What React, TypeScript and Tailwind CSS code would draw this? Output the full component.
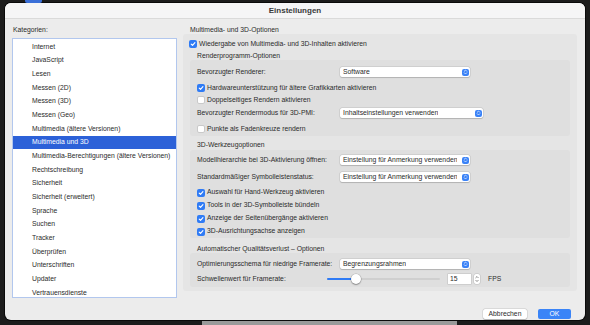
import React from 'react';

const categories = [
  'Internet',
  'JavaScript',
  'Lesen',
  'Messen (2D)',
  'Messen (3D)',
  'Messen (Geo)',
  'Multimedia (ältere Versionen)',
  'Multimedia und 3D',
  'Multimedia-Berechtigungen (ältere Versionen)',
  'Rechtschreibung',
  'Sicherheit',
  'Sicherheit (erweitert)',
  'Sprache',
  'Suchen',
  'Tracker',
  'Überprüfen',
  'Unterschriften',
  'Updater',
  'Vertrauensdienste',
];

const SELECTED = 'Multimedia und 3D';

function Checkbox({ checked }: { checked: boolean }) {
  if (!checked) {
    return <div className="w-[8px] h-[8px] shrink-0 rounded-[2px] bg-white border border-[#c9c9c9]" />;
  }
  return (
    <div className="w-[8px] h-[8px] shrink-0 rounded-[2px] bg-[#2f7bf5] flex items-center justify-center">
      <svg width="6" height="6" viewBox="0 0 10 10">
        <path d="M2 5.2 L4.2 7.4 L8.2 2.6" fill="none" stroke="white" strokeWidth="1.8" strokeLinecap="round" strokeLinejoin="round" />
      </svg>
    </div>
  );
}

function CheckRow({ checked, label, h = 'h-[12px]', extra = '' }: { checked: boolean; label: string; h?: string; extra?: string }) {
  return (
    <div className={`flex items-center gap-[2px] ${h} ${extra}`}>
      <Checkbox checked={checked} />
      <span>{label}</span>
    </div>
  );
}

function Stepper() {
  return (
    <div className="w-[7px] h-[7px] rounded-[2px] bg-[#3a82f7] flex items-center justify-center">
      <svg width="5" height="6" viewBox="0 0 10 12">
        <path d="M2.5 4.5 L5 2 L7.5 4.5 M2.5 7.5 L5 10 L7.5 7.5" fill="none" stroke="white" strokeWidth="1.4" strokeLinecap="round" strokeLinejoin="round" />
      </svg>
    </div>
  );
}

function Select({ value, w = 'w-[130px]' }: { value: string; w?: string }) {
  return (
    <div className={`${w} h-[10px] bg-white rounded-[2px] shadow-[0_0_0_0.5px_rgba(0,0,0,0.12),0_0.5px_1px_rgba(0,0,0,0.15)] flex items-center justify-between pl-[3px] pr-[1px]`}>
      <span className="truncate">{value}</span>
      <Stepper />
    </div>
  );
}

function SelectRow({ label, value, w, extra = '' }: { label: string; value: string; w?: string; extra?: string }) {
  return (
    <div className={`flex items-center h-[14px] ${extra}`}>
      <span className="w-[143px] shrink-0">{label}</span>
      <Select value={value} w={w} />
    </div>
  );
}

export default function App() {
  return (
    <div
      className="w-[590px] h-[325px] bg-[#1c1c1c] relative overflow-hidden pt-[3px] px-[5px] text-[6.8px] text-[#2b2b2b]"
      style={{ fontFamily: '"Liberation Sans", Arial, sans-serif' }}
    >
      <div className="absolute left-[25px] top-0 w-[17px] h-[3px] bg-[#3a6fd8] rounded-b-[2px]" />

      <div className="h-[317px] rounded-[6px] bg-[#ececec] flex flex-col overflow-hidden shadow-[0_0_0_1px_#0a0a0a]">
        <div className="h-[16px] shrink-0 bg-[#f5f5f6] border-b border-[#dadada] flex items-center justify-center text-[8px] font-bold text-[#3a3a3a]">
          Einstellungen
        </div>

        <div className="flex pl-[7px] pr-[8px] pt-[6px] gap-[6px]">
          <div className="w-[165px] shrink-0 flex flex-col">
            <div className="h-[10px] leading-[10px] mb-[3px] pl-[1px]">Kategorien:</div>
            <div className="h-[260px] bg-white border border-[#b2c7ee] pt-[1px] flex flex-col">
              {categories.map((c) => (
                <div
                  key={c}
                  className={`h-[13.67px] shrink-0 flex items-center pl-[19px] ${c === SELECTED ? 'bg-[#2c61d8] text-white' : ''}`}
                >
                  {c}
                </div>
              ))}
            </div>
          </div>

          <div className="flex-1 flex flex-col">
            <div className="h-[9px] leading-[9px] pl-[7px]">Multimedia- und 3D-Optionen</div>
            <div className="bg-[#e5e5e5] rounded-[3px] pt-[4px] pb-[4px] flex flex-col">
              <CheckRow checked label="Wiedergabe von Multimedia- und 3D-Inhalten aktivieren" extra="pl-[6px]" />
              <div className="h-[10px] leading-[10px] pl-[14px] mt-[1px] -mb-[1px]">Renderprogramm-Optionen</div>

              <div className="mx-[7px] bg-[#dfdfdf] rounded-[3px] pl-[7px] pt-[5px] pb-[1px] flex flex-col">
                <SelectRow label="Bevorzugter Renderer:" value="Software" />
                <CheckRow checked label="Hardwareunterstützung für ältere Grafikkarten aktivieren" extra="mt-[3px]" />
                <CheckRow checked={false} label="Doppelseitiges Rendern aktivieren" />
                <SelectRow label="Bevorzugter Rendermodus für 3D-PMI:" value="Inhaltseinstellungen verwenden" w="w-[143px]" />
                <CheckRow checked={false} label="Punkte als Fadenkreuze rendern" extra="mt-[3px]" />
              </div>

              <div className="h-[14px] pt-[4px] leading-[10px] pl-[14px]">3D-Werkzeugoptionen</div>

              <div className="mx-[7px] bg-[#dfdfdf] rounded-[3px] pl-[7px] pt-[3px] pb-[0px] flex flex-col">
                <SelectRow label="Modellhierarchie bei 3D-Aktivierung öffnen:" value="Einstellung für Anmerkung verwenden" />
                <SelectRow label="Standardmäßiger Symbolleistenstatus:" value="Einstellung für Anmerkung verwenden" extra="mt-[3px]" />
                <CheckRow checked label="Auswahl für Hand-Werkzeug aktivieren" h="h-[13px]" extra="mt-[2px]" />
                <CheckRow checked label="Tools in der 3D-Symbolleiste bündeln" h="h-[13px]" />
                <CheckRow checked label="Anzeige der Seitenübergänge aktivieren" h="h-[13px]" />
                <CheckRow checked label="3D-Ausrichtungsachse anzeigen" h="h-[13px]" />
              </div>

              <div className="h-[15px] pt-[6px] leading-[9px] pl-[14px]">Automatischer Qualitätsverlust – Optionen</div>

              <div className="mx-[7px] bg-[#dfdfdf] rounded-[3px] pl-[7px] pt-[4px] pb-[1px] flex flex-col">
                <SelectRow label="Optimierungsschema für niedrige Framerate:" value="Begrenzungsrahmen" />
                <div className="flex items-center h-[14px] mt-[1px]">
                  <span className="w-[130px] shrink-0">Schwellenwert für Framerate:</span>
                  <div className="relative w-[113px] h-[2px] bg-[#cfcfcf] rounded-full">
                    <div className="absolute left-0 top-0 h-[2px] w-[29px] bg-[#2f7bf5] rounded-full" />
                    <div className="absolute left-[24px] top-[-4px] w-[10px] h-[10px] rounded-full bg-white shadow-[0_0_0_0.5px_rgba(0,0,0,0.2),0_1px_1.5px_rgba(0,0,0,0.3)]" />
                  </div>
                  <div className="ml-[8px] w-[23px] h-[10px] bg-white shadow-[0_0_0_0.5px_rgba(0,0,0,0.15)] flex items-center pl-[2px]">15</div>
                  <div className="ml-[3px] w-[6px] h-[10px] rounded-[2px] bg-white shadow-[0_0_0_0.5px_rgba(0,0,0,0.15)] flex items-center justify-center">
                    <svg width="4" height="8" viewBox="0 0 8 16">
                      <path d="M1.5 5.5 L4 3 L6.5 5.5 M1.5 10.5 L4 13 L6.5 10.5" fill="none" stroke="#555" strokeWidth="1.3" strokeLinecap="round" strokeLinejoin="round" />
                    </svg>
                  </div>
                  <span className="ml-[8px]">FPS</span>
                </div>
              </div>
            </div>
          </div>
        </div>

        <div className="flex justify-end gap-[11px] pr-[14px] mt-[11px]">
          <div className="w-[44px] h-[10px] bg-white rounded-[2px] shadow-[0_0_0_0.5px_rgba(0,0,0,0.12),0_0.5px_1px_rgba(0,0,0,0.2)] flex items-center justify-center">
            Abbrechen
          </div>
          <div className="w-[33px] h-[10px] bg-[#3a84f7] text-white rounded-[2px] flex items-center justify-center">
            OK
          </div>
        </div>
      </div>

      <div className="ml-[197px] mt-[1px] w-[255px] h-[5px] bg-[#9a9a9a]" />
    </div>
  );
}
